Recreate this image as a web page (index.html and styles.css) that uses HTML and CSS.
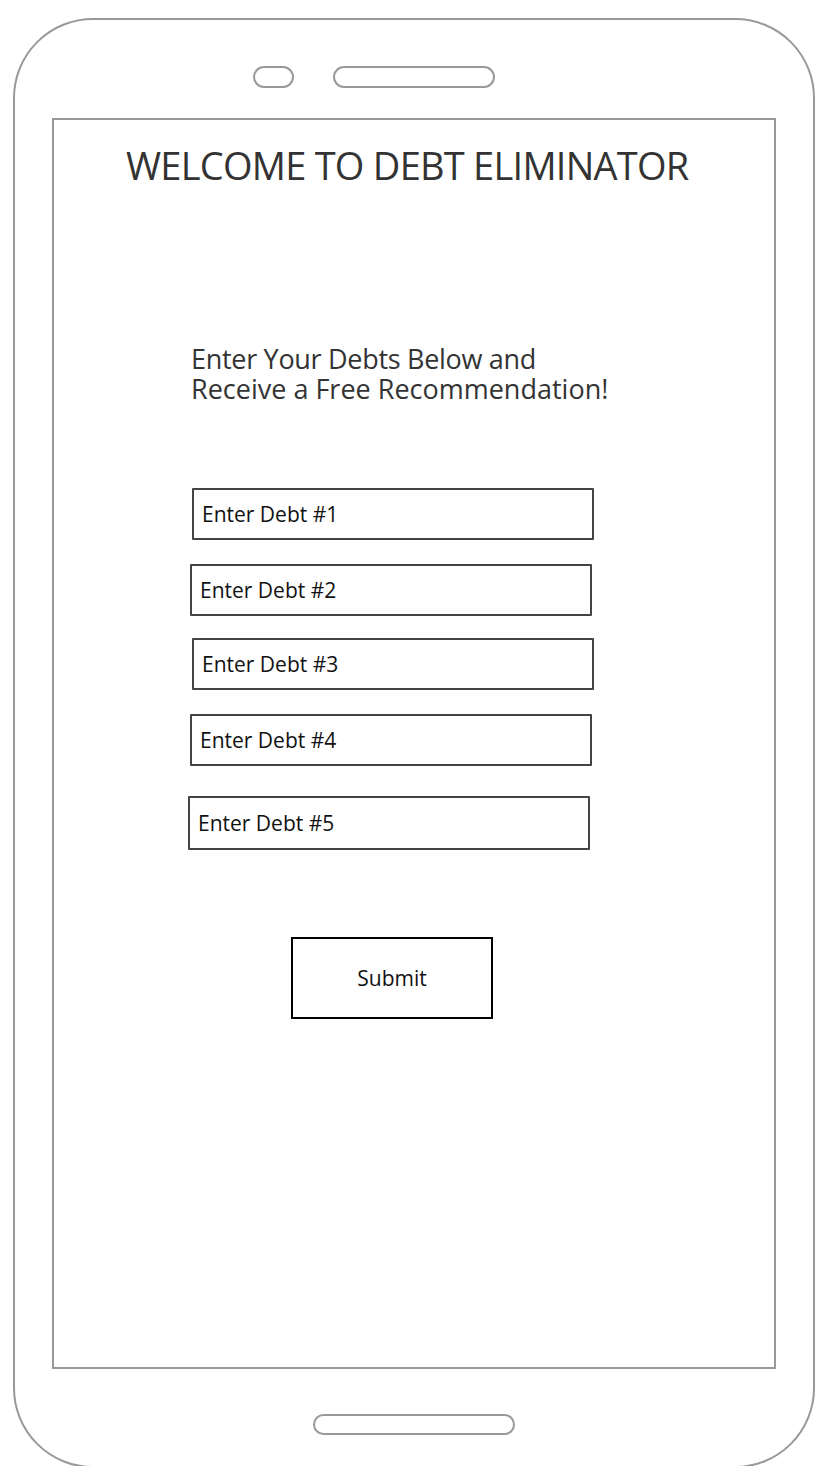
FILE: index.html
```html
<!DOCTYPE html>
<html lang="en">
<head>
<meta charset="utf-8">
<title>Debt Eliminator</title>
<link rel="stylesheet" href="styles.css">
</head>
<body>
<div class="phone">
  <div class="speakers">
    <span class="cam"></span>
    <span class="speaker"></span>
  </div>
  <main class="screen">
    <h1 class="title">WELCOME TO DEBT ELIMINATOR</h1>
    <p class="lead"><span class="lead-line">Enter Your Debts Below and</span><span class="lead-line">Receive a Free Recommendation!</span></p>
    <form class="debts">
      <input class="debt d1" type="text" placeholder="Enter Debt #1">
      <input class="debt d2" type="text" placeholder="Enter Debt #2">
      <input class="debt d3" type="text" placeholder="Enter Debt #3">
      <input class="debt d4" type="text" placeholder="Enter Debt #4">
      <input class="debt d5" type="text" placeholder="Enter Debt #5">
      <button class="submit" type="button">Submit</button>
    </form>
  </main>
  <div class="home"></div>
</div>
</body>
</html>
```

FILE: styles.css
```css
html, body {
  margin: 0;
  padding: 0;
  background: #fff;
}
body {
  width: 832px;
  height: 1466px;
  overflow: hidden;
  font-family: "Open Sans", "Liberation Sans", sans-serif;
}
.phone {
  box-sizing: border-box;
  margin: 18px 0 0 13px;
  width: 802px;
  height: 1450px;
  border: 2px solid #999;
  border-radius: 80px;
  display: flex;
  flex-direction: column;
  padding-top: 46px;
}
.speakers {
  display: flex;
  gap: 39px;
  margin-left: 238px;
  height: 22px;
}
.cam, .speaker {
  box-sizing: border-box;
  display: block;
  height: 22px;
  border: 2px solid #999;
  border-radius: 11px;
}
.cam { width: 41px; }
.speaker { width: 162px; }
.screen {
  box-sizing: border-box;
  margin: 30px 0 0 37px;
  width: 724px;
  height: 1251px;
  border: 2px solid #999;
  display: flex;
  flex-direction: column;
  padding-top: 22px;
}
.title {
  margin: 0 0 0 72px;
  font-size: 38px;
  line-height: 46px;
  font-weight: 400;
  letter-spacing: -0.75px;
  color: #333;
  white-space: nowrap;
}
.lead {
  margin: 156px 0 0 137px;
  font-size: 27px;
  line-height: 30px;
  color: #333;
  display: flex;
  flex-direction: column;
}
.lead-line {
  display: block;
  height: 30px;
  white-space: nowrap;
}
.lead-line:first-child {
  letter-spacing: -0.3px;
}
.debts {
  display: flex;
  flex-direction: column;
  align-items: flex-start;
  margin-top: 84px;
}
.debt {
  box-sizing: border-box;
  width: 402px;
  height: 52px;
  margin: 0;
  border: 2px solid #444;
  border-radius: 1px;
  padding: 0 0 0 8px;
  font-family: "Open Sans", "Liberation Sans", sans-serif;
  font-size: 21px;
  color: #111;
  background: #fff;
  outline: none;
}
.debt::placeholder {
  color: #111;
  opacity: 1;
}
.d1 { margin-left: 138px; }
.d2 { margin: 24px 0 0 136px; }
.d3 { margin: 22px 0 0 138px; }
.d4 { margin: 24px 0 0 136px; }
.d5 { margin: 30px 0 0 134px; height: 54px; }
.submit {
  box-sizing: border-box;
  margin: 87px 0 0 237px;
  width: 202px;
  height: 82px;
  border: 2px solid #000;
  background: #fff;
  padding: 0;
  font-family: "Open Sans", "Liberation Sans", sans-serif;
  font-size: 21px;
  color: #111;
}
.home {
  box-sizing: border-box;
  margin: 45px auto 0;
  width: 202px;
  height: 21px;
  border: 2px solid #999;
  border-radius: 11px;
}
```
